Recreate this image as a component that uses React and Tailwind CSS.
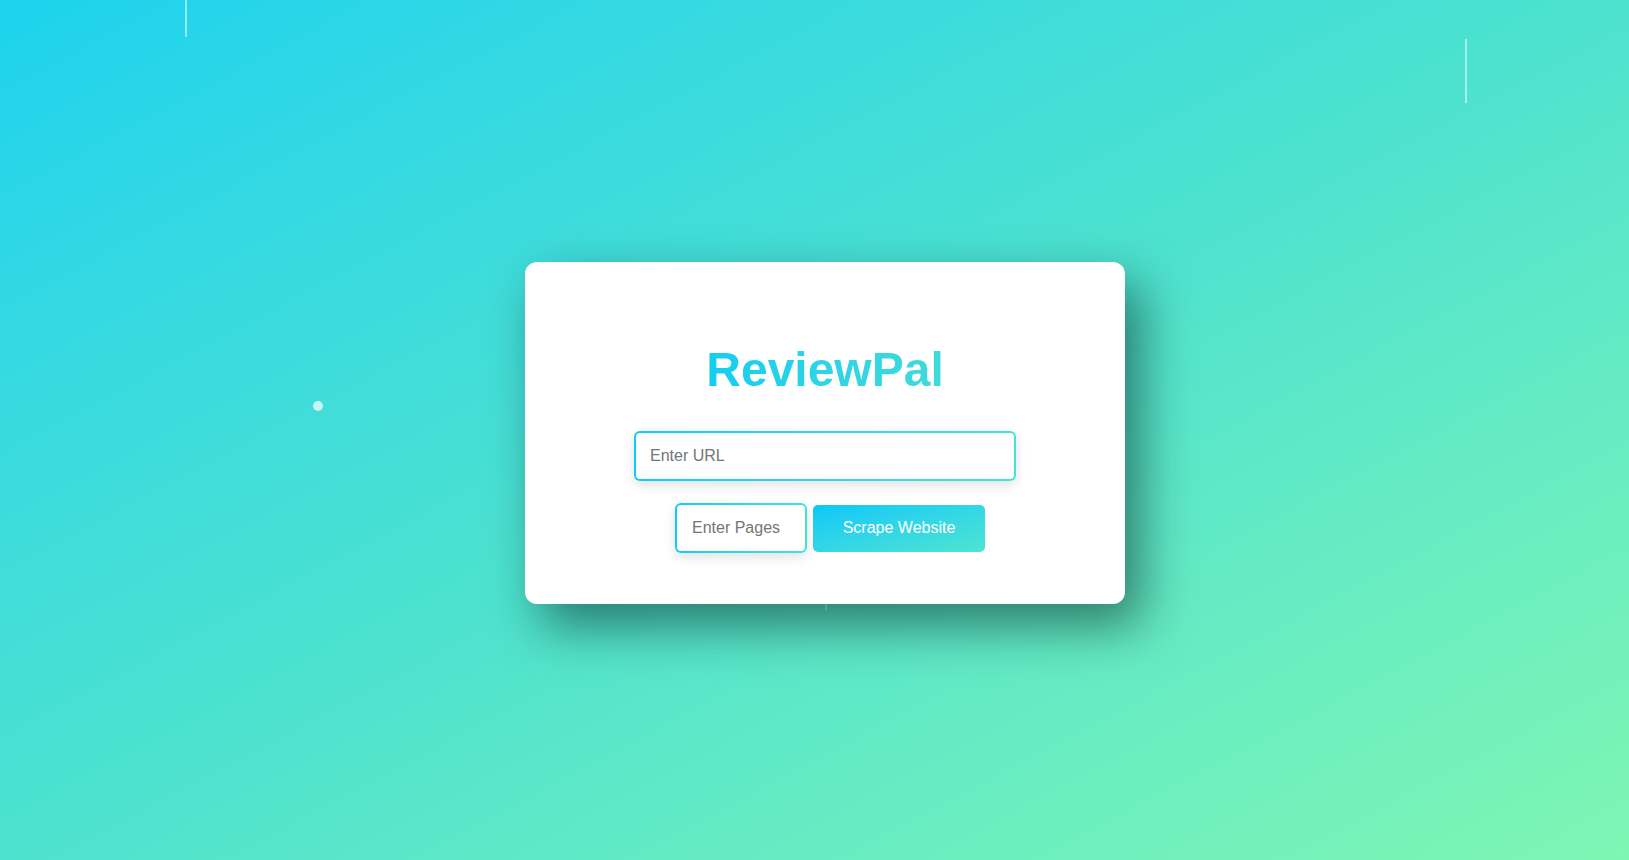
export default function App() {
  return (
    <div
      className="relative w-full h-[860px] overflow-hidden bg-gradient-to-br from-[#1cd2ee] via-[#4de2cf] to-[#7ef6b3] flex items-center justify-center pl-[21px] pt-[6px]"
      style={{ fontFamily: '"Liberation Sans", Arial, sans-serif' }}
    >
      {/* decorative particles */}
      <div className="absolute left-[185px] top-0 w-[2px] h-[37px] bg-white/50" />
      <div className="absolute left-[1465px] top-[39px] w-[2px] h-[64px] bg-white/50" />
      <div className="absolute left-[313px] top-[401px] w-[10px] h-[10px] rounded-full bg-white/70" />
      <div className="absolute left-[825px] top-[560px] w-[2px] h-[50px] bg-white/50" />

      <div className="relative w-[600px] h-[342px] bg-white rounded-[12px] shadow-[16px_22px_50px_rgba(0,20,20,0.5)] flex flex-col items-center pt-[84px]">
        <h1 className="text-[48px] leading-[48px] font-bold bg-gradient-to-r from-[#12cdf1] to-[#3fdbd9] bg-clip-text text-transparent">
          ReviewPal
        </h1>
        <div className="mt-[37px] w-[382px] h-[50px] p-[2px] rounded-[6px] bg-gradient-to-r from-[#0ccdf8] to-[#42e2d6] shadow-[0_4px_12px_rgba(0,0,0,0.12)]">
          <input
            type="text"
            placeholder="Enter URL"
            className="w-full h-full bg-white rounded-[4px] px-[14px] text-[16px] text-gray-700 placeholder:text-[#757575] outline-none"
          />
        </div>
        <div className="mt-[22px] flex items-center gap-[6px] pl-[10px]">
          <div className="w-[132px] h-[50px] p-[2px] rounded-[6px] bg-gradient-to-r from-[#0ccdf8] to-[#42e2d6] shadow-[0_4px_12px_rgba(0,0,0,0.12)]">
            <input
              type="text"
              placeholder="Enter Pages"
              className="w-full h-full bg-white rounded-[4px] px-[15px] text-[16px] text-gray-700 placeholder:text-[#757575] outline-none"
            />
          </div>
          <button className="w-[172px] h-[47px] rounded-[5px] bg-gradient-to-br from-[#05c8f9] to-[#4ee4d0] text-white text-[16px]">
            Scrape Website
          </button>
        </div>
      </div>
    </div>
  );
}
